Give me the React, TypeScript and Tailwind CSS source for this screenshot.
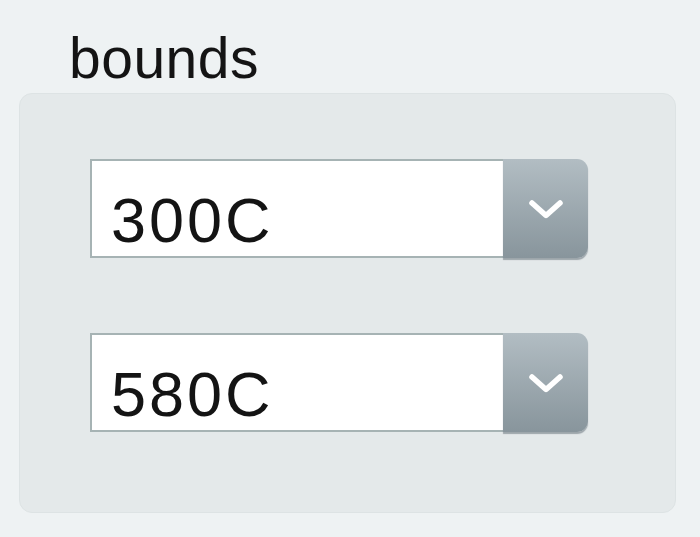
import React from 'react';

function Chevron() {
  return (
    <svg width="38" height="24" viewBox="0 0 38 24" fill="none">
      <path d="M5 6 L19 18.5 L33 6" stroke="#ffffff" strokeWidth="5.5" strokeLinecap="round" strokeLinejoin="round" />
    </svg>
  );
}

function TempSelect({ value }: { value: string }) {
  return (
    <div className="flex h-[99px] w-[498px]">
      <div className="flex-1 bg-white border-2 border-r-0 border-[#a6b3b4] pl-[19px] pt-[28px]">
        <span className="block text-[63px] leading-none tracking-[3px] text-[#141414]">{value}</span>
      </div>
      <div className="w-[85px] h-[99px] rounded-r-[11px] bg-gradient-to-b from-[#b2bdc3] to-[#88959c] shadow-[0_2px_1px_rgba(70,85,95,0.45)] flex items-center justify-center">
        <Chevron />
      </div>
    </div>
  );
}

export default function App() {
  return (
    <div className="w-[700px] h-[537px] bg-[#eef2f3] pt-[30px] px-[19px] font-['Liberation_Sans',Arial,sans-serif]">
      <div className="ml-[50px] text-[57px] leading-none tracking-[0.5px] text-[#141414] h-[63px]">bounds</div>
      <div className="w-[657px] h-[420px] rounded-[13px] bg-[#e4e9ea] border border-[#dde3e4] pt-[65px] pl-[70px] flex flex-col gap-[75px]">
        <TempSelect value="300C" />
        <TempSelect value="580C" />
      </div>
    </div>
  );
}
